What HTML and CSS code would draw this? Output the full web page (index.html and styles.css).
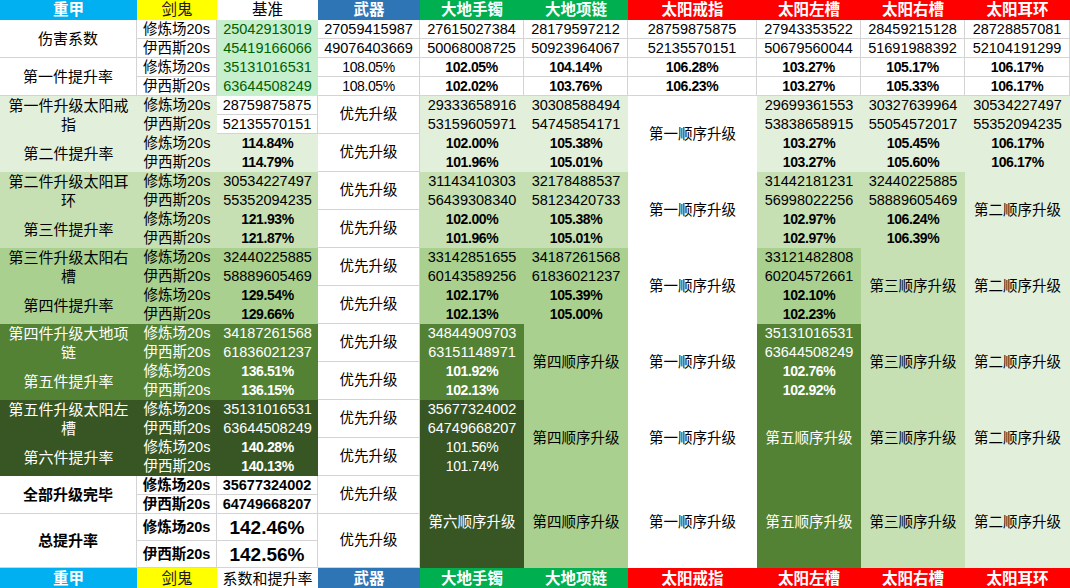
FILE: index.html
```html
<!DOCTYPE html>
<html lang="zh-CN">
<head>
<meta charset="utf-8">
<title>重甲 剑鬼 升级顺序</title>
<link rel="stylesheet" href="styles.css">
</head>
<body>
<div class="sheet">
  <!-- header -->
  <div class="c hd h-blue">重甲</div>
  <div class="c hd h-yel">剑鬼</div>
  <div class="c hd h-wht">基准</div>
  <div class="c hd h-navy">武器</div>
  <div class="c hd h-grn">大地手镯</div>
  <div class="c hd h-grn">大地项链</div>
  <div class="c hd h-red">太阳戒指</div>
  <div class="c hd h-red">太阳左槽</div>
  <div class="c hd h-red">太阳右槽</div>
  <div class="c hd h-red">太阳耳环</div>

  <!-- row 1 -->
  <div class="c lab w r2">伤害系数</div>
  <div class="c w">修炼场20s</div>
  <div class="c gd">25042913019</div>
  <div class="c w">27059415987</div>
  <div class="c w">27615027384</div>
  <div class="c w">28179597212</div>
  <div class="c w">28759875875</div>
  <div class="c w">27943353522</div>
  <div class="c w">28459215128</div>
  <div class="c w">28728857081</div>
  <!-- row 2 -->
  <div class="c w">伊西斯20s</div>
  <div class="c gd">45419166066</div>
  <div class="c w">49076403669</div>
  <div class="c w">50068008725</div>
  <div class="c w">50923964067</div>
  <div class="c w">52135570151</div>
  <div class="c w">50679560044</div>
  <div class="c w">51691988392</div>
  <div class="c w">52104191299</div>
  <!-- row 3 -->
  <div class="c lab w r2">第一件提升率</div>
  <div class="c w">修炼场20s</div>
  <div class="c gd">35131016531</div>
  <div class="c w pn">108.05%</div>
  <div class="c w pb">102.05%</div>
  <div class="c w pb">104.14%</div>
  <div class="c w pb">106.28%</div>
  <div class="c w pb">103.27%</div>
  <div class="c w pb">105.17%</div>
  <div class="c w pb">106.17%</div>
  <!-- row 4 -->
  <div class="c w">伊西斯20s</div>
  <div class="c gd">63644508249</div>
  <div class="c w pn">108.05%</div>
  <div class="c w pb">102.02%</div>
  <div class="c w pb">103.76%</div>
  <div class="c w pb">106.23%</div>
  <div class="c w pb">103.27%</div>
  <div class="c w pb">105.33%</div>
  <div class="c w pb">106.17%</div>

  <!-- row 5 -->
  <div class="c lab g1 r2">第一件升级太阳戒指</div>
  <div class="c g1">修炼场20s</div>
  <div class="c w">28759875875</div>
  <div class="c w r2">优先升级</div>
  <div class="c g1">29333658916</div>
  <div class="c g1">30308588494</div>
  <div class="c wf r4">第一顺序升级</div>
  <div class="c g1">29699361553</div>
  <div class="c g1">30327639964</div>
  <div class="c g1">30534227497</div>
  <!-- row 6 -->
  <div class="c g1">伊西斯20s</div>
  <div class="c w">52135570151</div>
  <div class="c g1">53159605971</div>
  <div class="c g1">54745854171</div>
  <div class="c g1">53838658915</div>
  <div class="c g1">55054572017</div>
  <div class="c g1">55352094235</div>
  <!-- row 7 -->
  <div class="c lab g1 r2">第二件提升率</div>
  <div class="c g1">修炼场20s</div>
  <div class="c g1 pb">114.84%</div>
  <div class="c w r2">优先升级</div>
  <div class="c g1 pb">102.00%</div>
  <div class="c g1 pb">105.38%</div>
  <div class="c g1 pb">103.27%</div>
  <div class="c g1 pb">105.45%</div>
  <div class="c g1 pb">106.17%</div>
  <!-- row 8 -->
  <div class="c g1">伊西斯20s</div>
  <div class="c g1 pb">114.79%</div>
  <div class="c g1 pb">101.96%</div>
  <div class="c g1 pb">105.01%</div>
  <div class="c g1 pb">103.27%</div>
  <div class="c g1 pb">105.60%</div>
  <div class="c g1 pb">106.17%</div>

  <!-- row 9 -->
  <div class="c lab g2 r2">第二件升级太阳耳环</div>
  <div class="c g2">修炼场20s</div>
  <div class="c g2">30534227497</div>
  <div class="c w r2">优先升级</div>
  <div class="c g2">31143410303</div>
  <div class="c g2">32178488537</div>
  <div class="c wf r4">第一顺序升级</div>
  <div class="c g2">31442181231</div>
  <div class="c g2">32440225885</div>
  <div class="c g1 r4">第二顺序升级</div>
  <!-- row 10 -->
  <div class="c g2">伊西斯20s</div>
  <div class="c g2">55352094235</div>
  <div class="c g2">56439308340</div>
  <div class="c g2">58123420733</div>
  <div class="c g2">56998022256</div>
  <div class="c g2">58889605469</div>
  <!-- row 11 -->
  <div class="c lab g2 r2">第三件提升率</div>
  <div class="c g2">修炼场20s</div>
  <div class="c g2 pb">121.93%</div>
  <div class="c w r2">优先升级</div>
  <div class="c g2 pb">102.00%</div>
  <div class="c g2 pb">105.38%</div>
  <div class="c g2 pb">102.97%</div>
  <div class="c g2 pb">106.24%</div>
  <!-- row 12 -->
  <div class="c g2">伊西斯20s</div>
  <div class="c g2 pb">121.87%</div>
  <div class="c g2 pb">101.96%</div>
  <div class="c g2 pb">105.01%</div>
  <div class="c g2 pb">102.97%</div>
  <div class="c g2 pb">106.39%</div>

  <!-- row 13 -->
  <div class="c lab g3 r2">第三件升级太阳右槽</div>
  <div class="c g3">修炼场20s</div>
  <div class="c g3">32440225885</div>
  <div class="c w r2">优先升级</div>
  <div class="c g3">33142851655</div>
  <div class="c g3">34187261568</div>
  <div class="c wf r4">第一顺序升级</div>
  <div class="c g3">33121482808</div>
  <div class="c g2 r4">第三顺序升级</div>
  <div class="c g1 r4">第二顺序升级</div>
  <!-- row 14 -->
  <div class="c g3">伊西斯20s</div>
  <div class="c g3">58889605469</div>
  <div class="c g3">60143589256</div>
  <div class="c g3">61836021237</div>
  <div class="c g3">60204572661</div>
  <!-- row 15 -->
  <div class="c lab g3 r2">第四件提升率</div>
  <div class="c g3">修炼场20s</div>
  <div class="c g3 pb">129.54%</div>
  <div class="c w r2">优先升级</div>
  <div class="c g3 pb">102.17%</div>
  <div class="c g3 pb">105.39%</div>
  <div class="c g3 pb">102.10%</div>
  <!-- row 16 -->
  <div class="c g3">伊西斯20s</div>
  <div class="c g3 pb">129.66%</div>
  <div class="c g3 pb">102.13%</div>
  <div class="c g3 pb">105.00%</div>
  <div class="c g3 pb">102.23%</div>

  <!-- row 17 -->
  <div class="c lab g4 r2">第四件升级大地项链</div>
  <div class="c g4">修炼场20s</div>
  <div class="c g4">34187261568</div>
  <div class="c w r2">优先升级</div>
  <div class="c g4">34844909703</div>
  <div class="c g3 r4">第四顺序升级</div>
  <div class="c wf r4">第一顺序升级</div>
  <div class="c g4">35131016531</div>
  <div class="c g2 r4">第三顺序升级</div>
  <div class="c g1 r4">第二顺序升级</div>
  <!-- row 18 -->
  <div class="c g4">伊西斯20s</div>
  <div class="c g4">61836021237</div>
  <div class="c g4">63151148971</div>
  <div class="c g4">63644508249</div>
  <!-- row 19 -->
  <div class="c lab g4 r2">第五件提升率</div>
  <div class="c g4">修炼场20s</div>
  <div class="c g4 pb">136.51%</div>
  <div class="c w r2">优先升级</div>
  <div class="c g4 pb">101.92%</div>
  <div class="c g4 pb">102.76%</div>
  <!-- row 20 -->
  <div class="c g4">伊西斯20s</div>
  <div class="c g4 pb">136.15%</div>
  <div class="c g4 pb">102.13%</div>
  <div class="c g4 pb">102.92%</div>

  <!-- row 21 -->
  <div class="c lab g5 r2">第五件升级太阳左槽</div>
  <div class="c g5">修炼场20s</div>
  <div class="c g5">35131016531</div>
  <div class="c w r2">优先升级</div>
  <div class="c g5">35677324002</div>
  <div class="c g3 r4">第四顺序升级</div>
  <div class="c wf r4">第一顺序升级</div>
  <div class="c g4 r4">第五顺序升级</div>
  <div class="c g2 r4">第三顺序升级</div>
  <div class="c g1 r4">第二顺序升级</div>
  <!-- row 22 -->
  <div class="c g5">伊西斯20s</div>
  <div class="c g5">63644508249</div>
  <div class="c g5">64749668207</div>
  <!-- row 23 -->
  <div class="c lab g5 r2">第六件提升率</div>
  <div class="c g5">修炼场20s</div>
  <div class="c g5 pb">140.28%</div>
  <div class="c w r2">优先升级</div>
  <div class="c g5 pn">101.56%</div>
  <!-- row 24 -->
  <div class="c g5">伊西斯20s</div>
  <div class="c g5 pb">140.13%</div>
  <div class="c g5 pn">101.74%</div>

  <!-- row 25 -->
  <div class="c lab w r2 b">全部升级完毕</div>
  <div class="c w b">修炼场20s</div>
  <div class="c w b">35677324002</div>
  <div class="c w r2">优先升级</div>
  <div class="c g5 r4">第六顺序升级</div>
  <div class="c g3 r4">第四顺序升级</div>
  <div class="c wf r4">第一顺序升级</div>
  <div class="c g4 r4">第五顺序升级</div>
  <div class="c g2 r4">第三顺序升级</div>
  <div class="c g1 r4">第二顺序升级</div>
  <!-- row 26 -->
  <div class="c w b">伊西斯20s</div>
  <div class="c w b">64749668207</div>
  <!-- row 27 -->
  <div class="c lab w r2 b">总提升率</div>
  <div class="c w b">修炼场20s</div>
  <div class="c w big">142.46%</div>
  <div class="c w r2">优先升级</div>
  <!-- row 28 -->
  <div class="c w b">伊西斯20s</div>
  <div class="c w big">142.56%</div>

  <!-- footer -->
  <div class="c hd h-blue">重甲</div>
  <div class="c hd h-yel">剑鬼</div>
  <div class="c hd h-wht ft">系数和提升率</div>
  <div class="c hd h-navy">武器</div>
  <div class="c hd h-grn">大地手镯</div>
  <div class="c hd h-grn">大地项链</div>
  <div class="c hd h-red">太阳戒指</div>
  <div class="c hd h-red">太阳左槽</div>
  <div class="c hd h-red">太阳右槽</div>
  <div class="c hd h-red">太阳耳环</div>
</div>
</body>
</html>
```

FILE: styles.css
```css
* { box-sizing: border-box; }

html, body {
  margin: 0;
  padding: 0;
  background: #ffffff;
}

body {
  font-family: "Liberation Sans", "Noto Sans CJK SC", sans-serif;
  color: #000000;
}

.sheet {
  width: 1070px;
  display: grid;
  grid-template-columns: 137px 80px 101px 102px 104px 104px 129px 104px 104px 105px;
  grid-template-rows: 20px repeat(26, 19px) 27px 27px 21px;
  overflow: hidden;
}

.c {
  display: flex;
  align-items: center;
  justify-content: center;
  text-align: center;
  font-size: 14.5px;
  line-height: 19px;
  white-space: nowrap;
  overflow: hidden;
}

.r2 { grid-row: span 2; }
.r4 { grid-row: span 4; }

.lab {
  white-space: normal;
  font-size: 15px;
  padding: 0 3px;
}

/* header / footer */
.hd {
  font-size: 15.5px;
  font-weight: 700;
  color: #ffffff;
  line-height: 20px;
}
.h-blue { background: #00b0f0; }
.h-yel { background: #ffff00; color: #1a1a1a; font-weight: 400; }
.h-wht { background: #ffffff; color: #000000; font-weight: 400; }
.h-navy { background: #2e75b6; }
.h-grn { background: #00b050; }
.h-red { background: #ff0000; }
.ft { font-size: 15px; }

/* fills */
.w {
  background: #ffffff;
  border-right: 1px solid #d4d4d4;
  border-bottom: 1px solid #d4d4d4;
}
.wf { background: #ffffff; }
.gd { background: #c6efce; color: #006100; }
.g1 { background: #e2efda; }
.g2 { background: #c6e0b4; }
.g3 { background: #a9d08e; }
.g4 { background: #548235; color: #ffffff; }
.g5 { background: #375623; color: #ffffff; }

/* text styles */
.b { font-weight: 700; }
.pb { font-weight: 700; font-size: 14px; letter-spacing: -0.4px; }
.pn { font-size: 14px; letter-spacing: -0.4px; }
.big { font-weight: 700; font-size: 19px; }
```
